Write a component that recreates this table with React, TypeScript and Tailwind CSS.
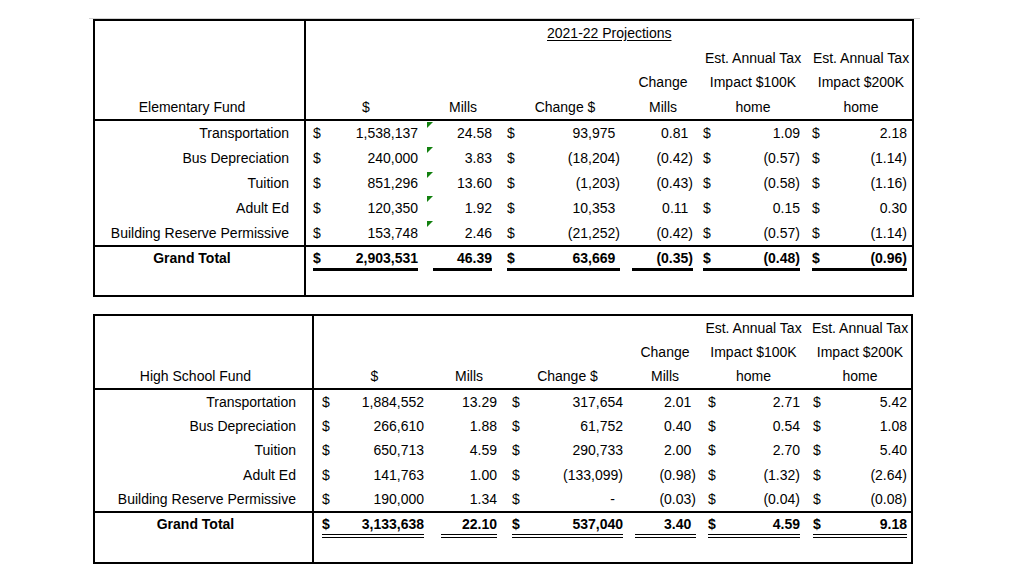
import React from "react";

interface ColDef {
  pad: string;
  dollar: boolean;
  paren?: boolean;
}

interface FundRow {
  label: string;
  values: string[];
}

interface FundTable {
  grid: string;
  labelPad: string;
  cols: ColDef[];
  rowHeight: string;
  headerRowHeight: string;
  totalHeight: string;
  totalUnderline: string;
  header: (string | null)[][];
  title: string;
  rows: FundRow[];
  total: string[];
  projections?: boolean;
  flags?: boolean;
}

const elementary: FundTable = {
  grid: "grid grid-cols-[211px_120px_74px_130px_66px_114px_102px]",
  labelPad: "pr-[15px]",
  cols: [
    { pad: "pl-[7px] pr-[8px]", dollar: true },
    { pad: "pl-[7px] pr-[8px]", dollar: false },
    { pad: "pl-[7px] pr-[10px]", dollar: true, paren: true },
    { pad: "pl-[2px] pr-[3px]", dollar: false, paren: true },
    { pad: "pl-[7px] pr-[10px]", dollar: true },
    { pad: "pl-[2px] pr-[5px]", dollar: true },
  ],
  rowHeight: "h-[24.8px]",
  headerRowHeight: "h-[24.5px]",
  totalHeight: "h-[48px]",
  totalUnderline: "border-b-[3px] border-black",
  header: [
    [null, null, null, null, "Est. Annual Tax", "Est. Annual Tax"],
    [null, null, null, "Change", "Impact $100K", "Impact $200K"],
    ["$", "Mills", "Change $", "Mills", "home", "home"],
  ],
  title: "Elementary Fund",
  rows: [
    { label: "Transportation", values: ["1,538,137", "24.58", "93,975", "0.81", "1.09", "2.18"] },
    { label: "Bus Depreciation", values: ["240,000", "3.83", "(18,204)", "(0.42)", "(0.57)", "(1.14)"] },
    { label: "Tuition", values: ["851,296", "13.60", "(1,203)", "(0.43)", "(0.58)", "(1.16)"] },
    { label: "Adult Ed", values: ["120,350", "1.92", "10,353", "0.11", "0.15", "0.30"] },
    { label: "Building Reserve Permissive", values: ["153,748", "2.46", "(21,252)", "(0.42)", "(0.57)", "(1.14)"] },
  ],
  total: ["2,903,531", "46.39", "63,669", "(0.35)", "(0.48)", "(0.96)"],
  projections: true,
  flags: true,
};

const highSchool: FundTable = {
  grid: "grid grid-cols-[219px_121px_68px_129px_66px_111px_102px]",
  labelPad: "pr-[16px]",
  cols: [
    { pad: "pl-[8px] pr-[11px]", dollar: true },
    { pad: "pl-[6px] pr-[6px]", dollar: false },
    { pad: "pl-[9px] pr-[9px]", dollar: true },
    { pad: "pl-[3px] pr-[2px]", dollar: false, paren: true },
    { pad: "pl-[10px] pr-[9px]", dollar: true },
    { pad: "pl-[4px] pr-[4px]", dollar: true },
  ],
  rowHeight: "h-[24.2px]",
  headerRowHeight: "h-[24px]",
  totalHeight: "h-[49px]",
  totalUnderline: "border-b-[4px] border-double border-black",
  header: [
    [null, null, null, null, "Est. Annual Tax", "Est. Annual Tax"],
    [null, null, null, "Change", "Impact $100K", "Impact $200K"],
    ["$", "Mills", "Change $", "Mills", "home", "home"],
  ],
  title: "High School Fund",
  rows: [
    { label: "Transportation", values: ["1,884,552", "13.29", "317,654", "2.01", "2.71", "5.42"] },
    { label: "Bus Depreciation", values: ["266,610", "1.88", "61,752", "0.40", "0.54", "1.08"] },
    { label: "Tuition", values: ["650,713", "4.59", "290,733", "2.00", "2.70", "5.40"] },
    { label: "Adult Ed", values: ["141,763", "1.00", "(133,099)", "(0.98)", "(1.32)", "(2.64)"] },
    { label: "Building Reserve Permissive", values: ["190,000", "1.34", "-", "(0.03)", "(0.04)", "(0.08)"] },
  ],
  total: ["3,133,638", "22.10", "537,040", "3.40", "4.59", "9.18"],
};

// Excel style accounting cell: "$" pinned left, figure pinned right
const Money: React.FC<{ value: string; col: ColDef }> = ({ value, col }) => {
  const negative = value.startsWith("(");
  return (
    <div className="flex justify-between">
      <span>{col.dollar ? "$" : ""}</span>
      {value === "-" ? (
        <span className="mr-[8px]">-</span>
      ) : (
        <span>
          {value}
          {col.paren && !negative && <span className="invisible">)</span>}
        </span>
      )}
    </div>
  );
};

const Flag: React.FC = () => (
  <svg className="absolute left-[1px] top-[1px]" width="6" height="6" viewBox="0 0 6 6">
    <polygon points="0,0 6,0 0,6" fill="#12800f" />
  </svg>
);

const Table: React.FC<{ t: FundTable; className?: string }> = ({ t, className }) => (
  <div className={`border-2 border-black ${className ?? ""}`}>
    {/* Header */}
    <div className="border-b-2 border-black">
      {t.projections && (
        <div className={`${t.grid} ${t.headerRowHeight}`}>
          <div className="border-r-2 border-black" />
          <div className="col-span-6 flex items-center pl-[241px]">
            <span className="underline underline-offset-2">2021-22 Projections</span>
          </div>
        </div>
      )}
      {t.header.map((cells, i) => (
        <div key={i} className={`${t.grid} ${t.headerRowHeight}`}>
          <div className={`flex items-center justify-center border-r-2 border-black ${t.labelPad}`}>
            {i === t.header.length - 1 ? t.title : ""}
          </div>
          {cells.map((c, j) => (
            <div key={j} className="flex items-center justify-center whitespace-nowrap">
              {c ?? ""}
            </div>
          ))}
        </div>
      ))}
    </div>

    {/* Fund lines */}
    <div className="border-b-2 border-black">
      {t.rows.map((r) => (
        <div key={r.label} className={`${t.grid} ${t.rowHeight}`}>
          <div className={`flex items-center justify-end border-r-2 border-black whitespace-nowrap ${t.labelPad}`}>
            {r.label}
          </div>
          {r.values.map((v, j) => (
            <div key={j} className={`relative flex flex-col justify-center ${t.cols[j].pad}`}>
              {t.flags && j === 1 && <Flag />}
              <Money value={v} col={t.cols[j]} />
            </div>
          ))}
        </div>
      ))}
    </div>

    {/* Grand total */}
    <div className={`${t.grid} ${t.totalHeight}`}>
      <div className={`border-r-2 border-black pt-[3px] text-center font-bold ${t.labelPad}`}>Grand Total</div>
      {t.total.map((v, j) => (
        <div key={j} className={`pt-[3px] font-bold ${t.cols[j].pad}`}>
          <div
            className={`pb-[2px] ${t.totalUnderline} ${
              t.flags && j === 3 ? "border-[#7a7a7a]" : ""
            }`}
          >
            <Money value={v} col={t.cols[j]} />
          </div>
        </div>
      ))}
    </div>
  </div>
);

const App: React.FC = () => {
  return (
    <div className="w-[1024px] h-[576px] overflow-hidden bg-white pt-[18px] pl-[89px] font-['Liberation_Sans',Arial,sans-serif] text-[14px] leading-[16px] text-black">
      <div className="h-px w-[831px] bg-[#d2d2d2]" />
      <Table t={elementary} className="ml-[4px] w-[821px]" />
      <Table t={highSchool} className="ml-[4px] mt-[17px] w-[820px]" />
    </div>
  );
};

export default App;
